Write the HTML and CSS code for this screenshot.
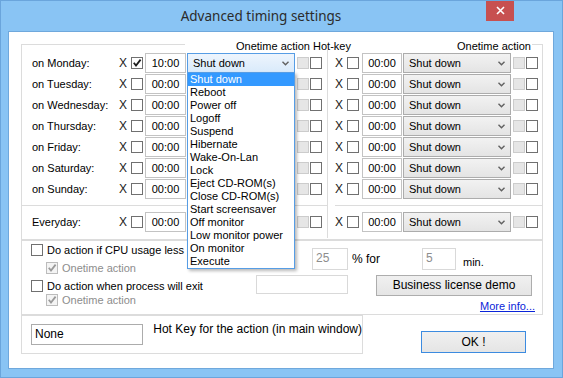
FILE: index.html
```html
<!DOCTYPE html>
<html>
<head>
<meta charset="utf-8">
<link rel="stylesheet" href="styles.css">
</head>
<body>
<div class="window">
  <div class="titlebar">
    <div class="title">Advanced timing settings</div>
    <div class="close"><svg width="9" height="9" viewBox="0 0 9 9"><path d="M1 1L8 8M8 1L1 8" stroke="#fff" stroke-width="1.6"/></svg></div>
  </div>
  <div class="client">
    <div class="timing">
      <div class="legend">
        <span class="lline l1"></span>
        <span class="cap cap1">Onetime action Hot-key</span>
        <span class="cap cap2">Onetime action</span>
        <span class="lline l2"></span>
      </div>
      <div class="cols">
        <div class="col left">
          <div class="week">
            <div class="row">
              <span class="lbl">on Monday:</span><span class="x">X</span>
              <span class="cb"><svg width="10" height="10" viewBox="0 0 10 10"><path d="M1.8 4.8L4 7.6L8.6 1.6" fill="none" stroke="#1e1e1e" stroke-width="1.8"/></svg></span>
              <span class="time">10:00</span>
              <span class="combo focus">Shut down<svg class="chev" width="7" height="5" viewBox="0 0 7 5"><path d="M0.5 0.8L3.5 3.8L6.5 0.8" fill="none" stroke="#606060" stroke-width="1.4"/></svg>
                <span class="list">
                  <span class="item sel">Shut down</span>
                  <span class="item">Reboot</span>
                  <span class="item">Power off</span>
                  <span class="item">Logoff</span>
                  <span class="item">Suspend</span>
                  <span class="item">Hibernate</span>
                  <span class="item">Wake-On-Lan</span>
                  <span class="item">Lock</span>
                  <span class="item">Eject CD-ROM(s)</span>
                  <span class="item">Close CD-ROM(s)</span>
                  <span class="item">Start screensaver</span>
                  <span class="item">Off monitor</span>
                  <span class="item">Low monitor power</span>
                  <span class="item">On monitor</span>
                  <span class="item">Execute</span>
                </span>
              </span>
              <span class="cb dis"></span><span class="cb"></span>
            </div>
            <div class="row"><span class="lbl">on Tuesday:</span><span class="x">X</span><span class="cb"></span><span class="time">00:00</span><span class="combo"></span><span class="cb dis"></span><span class="cb"></span></div>
            <div class="row"><span class="lbl">on Wednesday:</span><span class="x">X</span><span class="cb"></span><span class="time">00:00</span><span class="combo"></span><span class="cb dis"></span><span class="cb"></span></div>
            <div class="row"><span class="lbl">on Thursday:</span><span class="x">X</span><span class="cb"></span><span class="time">00:00</span><span class="combo"></span><span class="cb dis"></span><span class="cb"></span></div>
            <div class="row"><span class="lbl">on Friday:</span><span class="x">X</span><span class="cb"></span><span class="time">00:00</span><span class="combo"></span><span class="cb dis"></span><span class="cb"></span></div>
            <div class="row"><span class="lbl">on Saturday:</span><span class="x">X</span><span class="cb"></span><span class="time">00:00</span><span class="combo"></span><span class="cb dis"></span><span class="cb"></span></div>
            <div class="row"><span class="lbl">on Sunday:</span><span class="x">X</span><span class="cb"></span><span class="time">00:00</span><span class="combo"></span><span class="cb dis"></span><span class="cb"></span></div>
          </div>
          <div class="every">
            <div class="row"><span class="lbl">Everyday:</span><span class="x">X</span><span class="cb"></span><span class="time">00:00</span><span class="combo"></span><span class="cb dis"></span><span class="cb"></span></div>
          </div>
        </div>
        <div class="col right">
          <div class="week">
            <div class="row"><span class="x">X</span><span class="cb"></span><span class="time">00:00</span><span class="combo">Shut down<svg class="chev" width="7" height="5" viewBox="0 0 7 5"><path d="M0.5 0.8L3.5 3.8L6.5 0.8" fill="none" stroke="#606060" stroke-width="1.4"/></svg></span><span class="cb dis"></span><span class="cb"></span></div>
            <div class="row"><span class="x">X</span><span class="cb"></span><span class="time">00:00</span><span class="combo">Shut down<svg class="chev" width="7" height="5" viewBox="0 0 7 5"><path d="M0.5 0.8L3.5 3.8L6.5 0.8" fill="none" stroke="#606060" stroke-width="1.4"/></svg></span><span class="cb dis"></span><span class="cb"></span></div>
            <div class="row"><span class="x">X</span><span class="cb"></span><span class="time">00:00</span><span class="combo">Shut down<svg class="chev" width="7" height="5" viewBox="0 0 7 5"><path d="M0.5 0.8L3.5 3.8L6.5 0.8" fill="none" stroke="#606060" stroke-width="1.4"/></svg></span><span class="cb dis"></span><span class="cb"></span></div>
            <div class="row"><span class="x">X</span><span class="cb"></span><span class="time">00:00</span><span class="combo">Shut down<svg class="chev" width="7" height="5" viewBox="0 0 7 5"><path d="M0.5 0.8L3.5 3.8L6.5 0.8" fill="none" stroke="#606060" stroke-width="1.4"/></svg></span><span class="cb dis"></span><span class="cb"></span></div>
            <div class="row"><span class="x">X</span><span class="cb"></span><span class="time">00:00</span><span class="combo">Shut down<svg class="chev" width="7" height="5" viewBox="0 0 7 5"><path d="M0.5 0.8L3.5 3.8L6.5 0.8" fill="none" stroke="#606060" stroke-width="1.4"/></svg></span><span class="cb dis"></span><span class="cb"></span></div>
            <div class="row"><span class="x">X</span><span class="cb"></span><span class="time">00:00</span><span class="combo">Shut down<svg class="chev" width="7" height="5" viewBox="0 0 7 5"><path d="M0.5 0.8L3.5 3.8L6.5 0.8" fill="none" stroke="#606060" stroke-width="1.4"/></svg></span><span class="cb dis"></span><span class="cb"></span></div>
            <div class="row"><span class="x">X</span><span class="cb"></span><span class="time">00:00</span><span class="combo">Shut down<svg class="chev" width="7" height="5" viewBox="0 0 7 5"><path d="M0.5 0.8L3.5 3.8L6.5 0.8" fill="none" stroke="#606060" stroke-width="1.4"/></svg></span><span class="cb dis"></span><span class="cb"></span></div>
          </div>
          <div class="every">
            <div class="row"><span class="x">X</span><span class="cb"></span><span class="time">00:00</span><span class="combo">Shut down<svg class="chev" width="7" height="5" viewBox="0 0 7 5"><path d="M0.5 0.8L3.5 3.8L6.5 0.8" fill="none" stroke="#606060" stroke-width="1.4"/></svg></span><span class="cb dis"></span><span class="cb"></span></div>
          </div>
        </div>
      </div>
    </div>

    <div class="cpu">
      <div class="opts">
        <div class="opt"><span class="cb"></span><span class="clip">Do action if CPU usage less than</span></div>
        <div class="opt sub"><span class="cb gray"><svg width="10" height="10" viewBox="0 0 10 10"><path d="M1.8 4.8L4 7.6L8.6 1.6" fill="none" stroke="#9a9a9a" stroke-width="1.8"/></svg></span><span>Onetime action</span></div>
        <div class="opt"><span class="cb"></span><span>Do action when process will exit</span></div>
        <div class="opt sub nogap"><span class="cb gray"><svg width="10" height="10" viewBox="0 0 10 10"><path d="M1.8 4.8L4 7.6L8.6 1.6" fill="none" stroke="#9a9a9a" stroke-width="1.8"/></svg></span><span>Onetime action</span></div>
      </div>
      <div class="mid">
        <div class="in25">25</div>
        <div class="inblank"></div>
      </div>
      <div class="rgt">
        <div class="r1"><span class="pfor">% for</span><span class="in5">5</span><span class="minl">min.</span></div>
        <div class="biz">Business license demo</div>
        <div class="more"><a class="link">More info...</a></div>
      </div>
    </div>

    <div class="bottom">
      <div class="hot">
        <div class="none">None</div>
        <div class="hotlbl">Hot Key for the action (in main window)</div>
      </div>
      <div class="ok">OK !</div>
    </div>
  </div>
</div>
</body>
</html>
```

FILE: styles.css
```css
* { box-sizing: border-box; }
body {
  margin: 0;
  font-family: "Liberation Sans", Arial, sans-serif;
  font-size: 11px;
  color: #000;
}
.window {
  width: 563px;
  height: 378px;
  background: #89c4f4;
  border: 1px solid #6aa5dc;
  display: flex;
  flex-direction: column;
  overflow: hidden;
}
.titlebar {
  height: 30px;
  display: flex;
  flex-shrink: 0;
}
.title {
  flex: 1;
  padding-left: 35px;
  text-align: center;
  font-family: "Noto Sans", sans-serif;
  font-size: 13.5px;
  line-height: 30px;
  color: #2b2b2b;
}
.close {
  width: 28px;
  height: 21px;
  margin-top: -1px;
  margin-right: 48px;
  background: #c75050;
  display: flex;
  align-items: center;
  justify-content: center;
}
.client {
  margin: 0 8px 0 7px;
  height: 338px;
  background: #fff;
  border: 1px solid #6fa8dc;
  padding: 12px 10px 0 12px;
}

/* timing grid */
.timing {
  border: 1px solid #dcdcdc;
  border-top: none;
}
.legend {
  height: 1px;
  display: flex;
  align-items: center;
}
.lline { height: 1px; background: #dcdcdc; }
.l1 { width: 163px; }
.l2 { flex: 1; }
.cap {
  line-height: 12px;
  white-space: nowrap;
  margin-top: 2px;
}
.cap1 { margin-left: 51px; width: 221px; }
.cap2 { padding-right: 1px; }

.cols { display: flex; }
.col.left { width: 305px; }
.col.right { flex: 1; position: relative; padding-left: 8px; }
.col.right::before {
  content: "";
  position: absolute;
  left: 0;
  top: 5px;
  bottom: 1px;
  width: 1px;
  background: #dcdcdc;
}
.week { padding: 8px 0 5px; }
.every { border-top: 1px solid #dcdcdc; padding: 6px 0 6px; }

.row {
  height: 21px;
  display: flex;
  align-items: flex-start;
}
.lbl {
  width: 97px;
  padding-left: 10px;
  line-height: 20px;
  white-space: nowrap;
}
.x {
  width: 12px;
  line-height: 20px;
  font-size: 12px;
  color: #222;
}
.cb {
  width: 12px;
  height: 12px;
  border: 1px solid #707070;
  background: #fff;
  margin-top: 4px;
  flex-shrink: 0;
  display: flex;
  align-items: center;
  justify-content: center;
}
.cb.dis { border-color: #cccccc; background: #e6e6e6; }
.cb + .cb { margin-left: 1px; }
.time {
  width: 41px;
  height: 20px;
  margin-left: 2px;
  border: 1px solid #c3c3c3;
  text-align: center;
  line-height: 18px;
}
.right .time { width: 40px; margin-left: 3px; }
.combo {
  width: 108px;
  height: 20px;
  margin-left: 1px;
  margin-right: 2px;
  border: 1px solid #acacac;
  background: linear-gradient(#f2f2f2, #e4e4e4);
  display: flex;
  align-items: center;
  justify-content: space-between;
  padding: 0 5px;
  line-height: 18px;
  position: relative;
  white-space: nowrap;
}
.combo.focus {
  border-color: #569de5;
  background: linear-gradient(#eef5fd, #d9eafb);
}
.chev { flex-shrink: 0; }
.list {
  position: absolute;
  left: -1px;
  top: 18px;
  width: 108px;
  border: 1px solid #569de5;
  background: #fff;
  box-shadow: 2px 2px 3px rgba(0, 0, 0, 0.28);
  z-index: 10;
  display: flex;
  flex-direction: column;
}
.item {
  height: 13px;
  line-height: 13px;
  padding-left: 2px;
}
.item.sel { background: #3399ff; color: #fff; }

/* cpu box */
.cpu {
  height: 75px;
  border: 1px solid #dcdcdc;
  display: flex;
}
.opts {
  width: 234px;
  padding: 2px 0 0 9px;
}
.opt {
  display: flex;
  align-items: center;
  height: 14px;
  white-space: nowrap;
  margin-top: 4px;
}
.opt:first-child { margin-top: 0; }
.opt.nogap { margin-top: 0; }
.opt .cb { margin-top: 0; margin-right: 4px; }
.opt.sub { padding-left: 15px; color: #8d8d8d; }
.clip { width: 139px; overflow: hidden; }
.cb.gray { border-color: #bcbcbc; background: #f4f4f4; }
.mid {
  width: 92px;
  display: flex;
  flex-direction: column;
  align-items: flex-end;
}
.in25 {
  width: 36px;
  height: 22px;
  margin-top: 7px;
  border: 1px solid #d9d9d9;
  color: #8d8d8d;
  padding: 1px 3px;
  line-height: 16px;
  font-size: 12px;
}
.inblank {
  width: 92px;
  height: 19px;
  margin-top: 5px;
  border: 1px solid #d9d9d9;
}
.rgt { flex: 1; padding-left: 4px; }
.r1 { display: flex; margin-top: 7px; height: 22px; }
.pfor { width: 70px; line-height: 22px; font-size: 12px; }
.in5 {
  width: 34px;
  height: 22px;
  border: 1px solid #d9d9d9;
  color: #8d8d8d;
  padding: 1px 3px;
  line-height: 16px;
  font-size: 12px;
}
.minl { margin-left: 7px; padding-top: 3px; line-height: 22px; }
.biz {
  margin: 5px 0 0 24px;
  width: 156px;
  height: 21px;
  border: 1px solid #adadad;
  background: linear-gradient(#f0f0f0, #e5e5e5);
  text-align: center;
  line-height: 19px;
  font-size: 12px;
}
.more {
  text-align: right;
  padding-right: 7px;
  margin-top: 3px;
  line-height: 14px;
}
.link { color: #0a24d9; text-decoration: underline; }

/* bottom */
.bottom { display: flex; align-items: flex-start; }
.hot {
  width: 342px;
  height: 39px;
  border: 1px solid #dcdcdc;
  display: flex;
  align-items: flex-start;
  padding: 8px 0 0 9px;
}
.none {
  width: 115px;
  height: 21px;
  border: 1px solid #acacac;
  padding-left: 3px;
  line-height: 19px;
  font-size: 12px;
}
.hotlbl {
  margin-left: 10px;
  margin-top: -2px;
  line-height: 14px;
  font-size: 12px;
  white-space: nowrap;
}
.ok {
  margin: 16px 0 0 58px;
  width: 105px;
  height: 22px;
  border: 1px solid #3c8be0;
  background: linear-gradient(#f0f0f0, #e5e5e5);
  text-align: center;
  line-height: 20px;
  font-size: 12px;
}
```
